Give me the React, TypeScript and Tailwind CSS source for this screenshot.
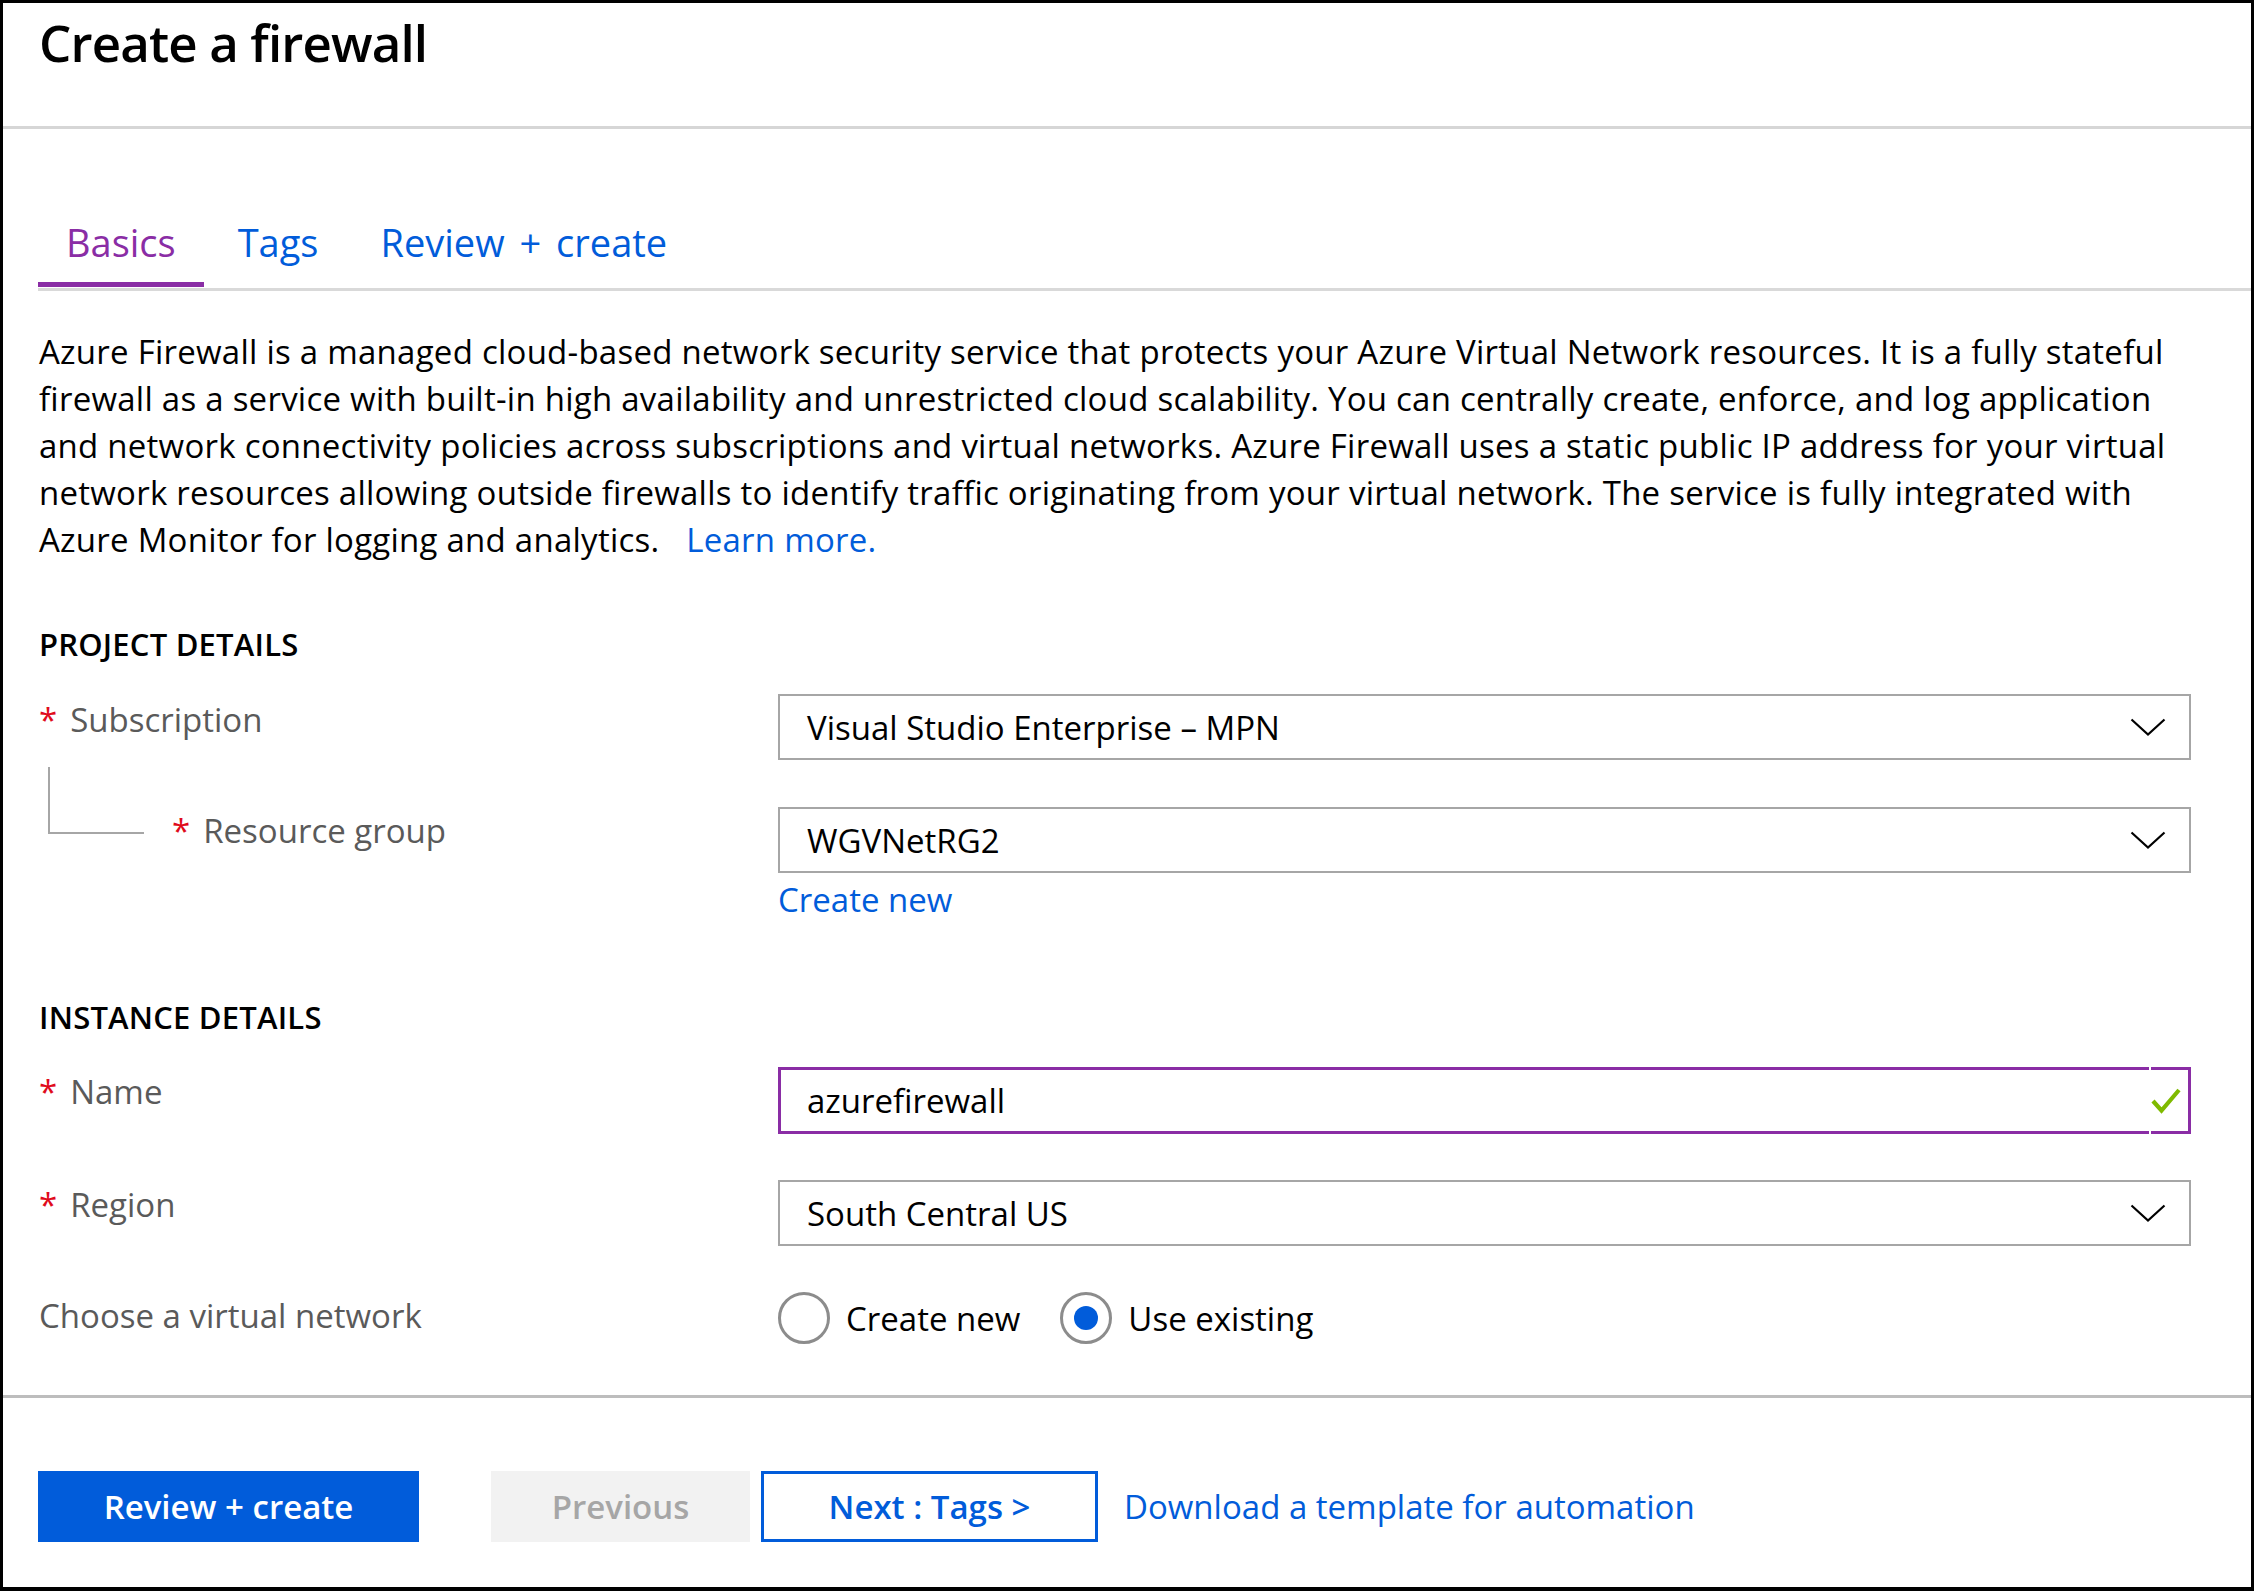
import React from "react";

function Chevron() {
  return (
    <svg width="36" height="18" viewBox="0 0 36 18" fill="none">
      <path d="M1.5 1.5 L18 16.5 L34.5 1.5" stroke="#000" strokeWidth="2.2" />
    </svg>
  );
}

function Check() {
  return (
    <svg width="30" height="26" viewBox="0 0 30 26" fill="none">
      <path d="M2 13 L10.5 22.5 L28 2" stroke="#7fba00" strokeWidth="4.2" />
    </svg>
  );
}

function Required() {
  return <span className="mr-[13px] text-[#e00b1c]">*</span>;
}

function Dropdown({ value }: { value: string }) {
  return (
    <div className="flex h-[66px] w-[1413px] items-center justify-between border-2 border-[#a6a6a6] pl-[27px] pr-[23px]">
      <span className="text-black">{value}</span>
      <Chevron />
    </div>
  );
}

const tabs = ["Basics", "Tags", "Review + create"];

export default function App() {
  return (
    <div className="flex h-[1591px] w-[2254px] flex-col overflow-hidden border-[3px] border-b-[4px] border-black bg-white font-['Open_Sans',sans-serif] text-[33px] leading-[47px] text-black">
      <div className="h-[126px] shrink-0 border-b-[3px] border-[#d6d6d6] pl-[36px] pt-[8px]">
        <h1 className="text-[51px] font-semibold leading-[62px] tracking-[-0.85px]">
          Create a firewall
        </h1>
      </div>

      <div className="flex-1">
        <div className="ml-[35px] flex gap-[6px] border-b-[3px] border-[#d9d9d9] pt-[89px]">
          {tabs.map((t, i) => (
            <div
              key={t}
              className={`mb-[1px] border-b-[5px] px-[28px] pb-[16px] text-[38px] leading-[48px] [word-spacing:5px] ${
                i === 0
                  ? "border-[#8a2da5] text-[#8a2da5]"
                  : "border-transparent text-[#015cda]"
              }`}
            >
              {t}
            </div>
          ))}
        </div>

        <div className="px-[36px]">
          <p className="mt-[37px] whitespace-nowrap tracking-[0.25px]">
            Azure Firewall is a managed cloud-based network security service that protects your Azure Virtual Network resources. It is a fully stateful
            <br />
            firewall as a service with built-in high availability and unrestricted cloud scalability. You can centrally create, enforce, and log application
            <br />
            and network connectivity policies across subscriptions and virtual networks. Azure Firewall uses a static public IP address for your virtual
            <br />
            network resources allowing outside firewalls to identify traffic originating from your virtual network. The service is fully integrated with
            <br />
            Azure Monitor for logging and analytics.{" "}
            <a className="ml-[18px] text-[#015cda]">Learn more.</a>
          </p>

          <h2 className="mt-[61px] text-[31px] font-semibold leading-[40px] tracking-[0.2px]">
            PROJECT DETAILS
          </h2>

          <div className="mt-[30px] flex">
            <div className="w-[739px] pt-[2px] text-[#5a5a5a]">
              <Required />
              Subscription
            </div>
            <Dropdown value="Visual Studio Enterprise – MPN" />
          </div>

          <div className="mt-[47px] flex">
            <div className="flex w-[739px] text-[#5a5a5a]">
              <div className="ml-[9px] mt-[-40px] h-[67px] w-[96px] border-b-2 border-l-2 border-[#a6a6a6]" />
              <div className="ml-[28px]">
                <Required />
                Resource group
              </div>
            </div>
            <div>
              <Dropdown value="WGVNetRG2" />
              <a className="mt-[3px] block text-[#015cda]">Create new</a>
            </div>
          </div>

          <h2 className="mt-[74px] text-[31px] font-semibold leading-[40px] tracking-[0.2px]">
            INSTANCE DETAILS
          </h2>

          <div className="mt-[30px] flex">
            <div className="w-[739px] pt-[1px] text-[#5a5a5a]">
              <Required />
              Name
            </div>
            <div className="flex h-[67px] w-[1413px] gap-[2px]">
              <div className="flex flex-1 items-center border-y-[3px] border-l-[3px] border-[#8a2da5] pl-[26px]">
                azurefirewall
              </div>
              <div className="flex w-[40px] items-center border-y-[3px] border-r-[3px] border-[#8a2da5]">
                <Check />
              </div>
            </div>
          </div>

          <div className="mt-[46px] flex">
            <div className="w-[739px] pt-[1px] text-[#5a5a5a]">
              <Required />
              Region
            </div>
            <Dropdown value="South Central US" />
          </div>

          <div className="mt-[46px] flex">
            <div className="w-[739px] text-[#5a5a5a]">Choose a virtual network</div>
            <div className="flex items-center">
              <span className="h-[52px] w-[52px] rounded-full border-[3px] border-[#8c8c8c]" />
              <span className="ml-[16px]">Create new</span>
              <span className="ml-[40px] flex h-[52px] w-[52px] items-center justify-center rounded-full border-[3px] border-[#8c8c8c]">
                <span className="h-[24px] w-[24px] rounded-full bg-[#015cda]" />
              </span>
              <span className="ml-[16px]">Use existing</span>
            </div>
          </div>
        </div>
      </div>

      <div className="flex h-[192px] shrink-0 items-start border-t-[3px] border-[#bdbdbd] pl-[35px] pt-[73px]">
        <button className="h-[71px] w-[381px] bg-[#015cda] font-semibold text-white">
          Review + create
        </button>
        <button className="ml-[72px] h-[71px] w-[259px] bg-[#f2f2f2] font-semibold text-[#a6a6a6]">
          Previous
        </button>
        <button className="ml-[11px] h-[71px] w-[337px] border-[3px] border-[#015cda] font-semibold text-[#015cda]">
          Next : Tags &gt;
        </button>
        <a className="ml-[26px] flex h-[71px] items-center text-[#015cda]">
          Download a template for automation
        </a>
      </div>
    </div>
  );
}
